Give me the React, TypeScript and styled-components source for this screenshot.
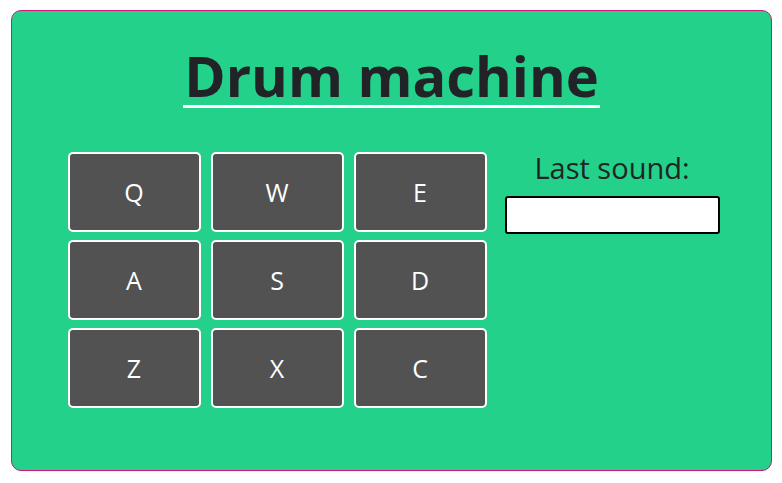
import React from "react";
import styled, { createGlobalStyle } from "styled-components";

const Global = createGlobalStyle`
  html, body { margin: 0; padding: 0; background: #ffffff; }
  body { font-family: "Open Sans", "Noto Sans", sans-serif; }
  * { box-sizing: border-box; }
`;

const Page = styled.div`
  padding: 10px 11px;
`;

const Machine = styled.div`
  width: 761px;
  height: 461px;
  border: 1px solid #d4147c;
  border-radius: 10px;
  background: #23d18b;
  display: flex;
  flex-direction: column;
  align-items: center;
`;

const Title = styled.h1`
  margin: 36px 0 0;
  font-size: 56px;
  font-weight: 700;
  line-height: 1;
  color: #212327;
  display: inline-block;
  padding: 0 1px 2px;
  border-bottom: 3px solid #ffffff;
`;

const Main = styled.div`
  margin-top: 44px;
  display: flex;
  align-items: flex-start;
  gap: 18px;
  margin-left: 4px;
`;

const Pads = styled.div`
  display: grid;
  grid-template-columns: repeat(3, 133px);
  grid-auto-rows: 80px;
  column-gap: 10px;
  row-gap: 8px;
`;

const Pad = styled.button`
  background: #525252;
  border: 2px solid #ffffff;
  border-radius: 5px;
  color: #ffffff;
  font-family: "Open Sans", "Noto Sans", sans-serif;
  font-size: 25px;
  cursor: pointer;
  padding: 0;
`;

const Side = styled.div`
  width: 215px;
  display: flex;
  flex-direction: column;
  align-items: center;
`;

const Label = styled.div`
  margin-top: 1px;
  font-size: 29px;
  line-height: 1;
  color: #212327;
`;

const Display = styled.div`
  margin-top: 14px;
  width: 215px;
  height: 38px;
  background: #ffffff;
  border: 2px solid #000000;
  border-radius: 3px;
`;

const keys = ["Q", "W", "E", "A", "S", "D", "Z", "X", "C"];

export default function App() {
  return (
    <Page>
      <Global />
      <Machine>
        <Title>Drum machine</Title>
        <Main>
          <Pads>
            {keys.map((k) => (
              <Pad key={k}>{k}</Pad>
            ))}
          </Pads>
          <Side>
            <Label>Last sound:</Label>
            <Display />
          </Side>
        </Main>
      </Machine>
    </Page>
  );
}
